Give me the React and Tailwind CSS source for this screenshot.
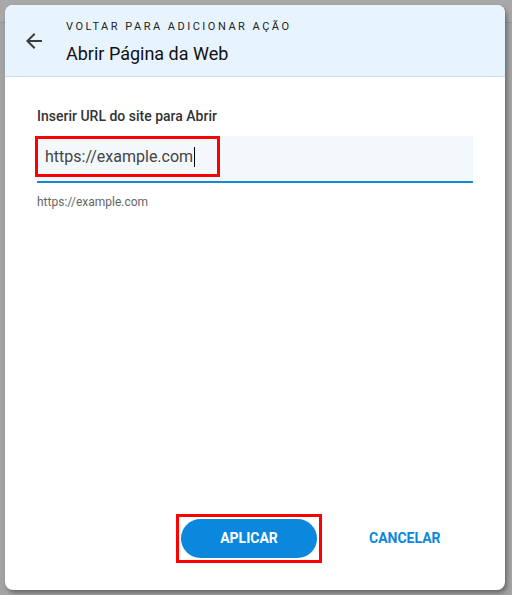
import React from 'react'

const ArrowLeft = () => (
  <svg width="24" height="24" viewBox="0 0 24 24" fill="none">
    <path d="M20 11H7.83l5.59-5.59L12 4l-8 8 8 8 1.41-1.41L7.83 13H20v-2z" fill="#3c3c3c" />
  </svg>
)

export default function App() {
  return (
    <div className="relative w-[512px] h-[595px] bg-[#a3a3a3] overflow-hidden font-['Roboto',sans-serif]">
      {/* page behind the overlay */}
      <div className="h-[23px] bg-[#a8a8a8] border-b border-[#969696]" />

      {/* dialog */}
      <div className="absolute left-[5px] top-[5px] w-[500px] h-[585px] bg-white rounded-[8px] shadow-[2px_3px_4px_rgba(0,0,0,0.35)] flex flex-col overflow-hidden">
        <div className="h-[72px] bg-[#e8f4fd] border-b border-[#cfdde8] flex items-center">
          <div className="w-[61px] flex justify-center pr-[4px] pt-[1px]">
            <ArrowLeft />
          </div>
          <div className="flex flex-col">
            <span className="text-[11px] tracking-[2.5px] text-[#222] leading-[14px] mt-[4px]">VOLTAR PARA ADICIONAR AÇÃO</span>
            <span className="text-[18px] text-[#111] leading-[22px] mt-[9px]">Abrir Página da Web</span>
          </div>
        </div>

        <div className="flex-1 flex flex-col px-[32px] pt-[31px]">
          <label className="text-[14px] font-medium text-[#333] leading-[17px]">Inserir URL do site para Abrir</label>
          <div className="mt-[11px] h-[47px] bg-[#f3f8fc] border-b-2 border-[#1a86d6] flex items-start">
            <div className="border-[3px] border-[#ff0000] w-[185px] h-[41px] ml-[-2px] flex items-center pl-[7px] pt-[1px]">
              <span className="text-[16px] text-[#444]">https://example.com</span>
              <span className="w-px h-[20px] bg-black ml-[1px]" />
            </div>
          </div>
          <span className="mt-[10px] text-[12px] text-[#666]">https://example.com</span>

          <div className="mt-auto mb-[27px] flex items-center">
            <div className="ml-[139px] border-[3px] border-[#ff0000] p-[2px]">
              <button className="w-[136px] h-[39px] rounded-full bg-[#0b88dd] text-white text-[14px] font-bold">APLICAR</button>
            </div>
            <button className="ml-[47px] text-[14px] font-bold text-[#0b88dd]">CANCELAR</button>
          </div>
        </div>
      </div>
    </div>
  )
}
